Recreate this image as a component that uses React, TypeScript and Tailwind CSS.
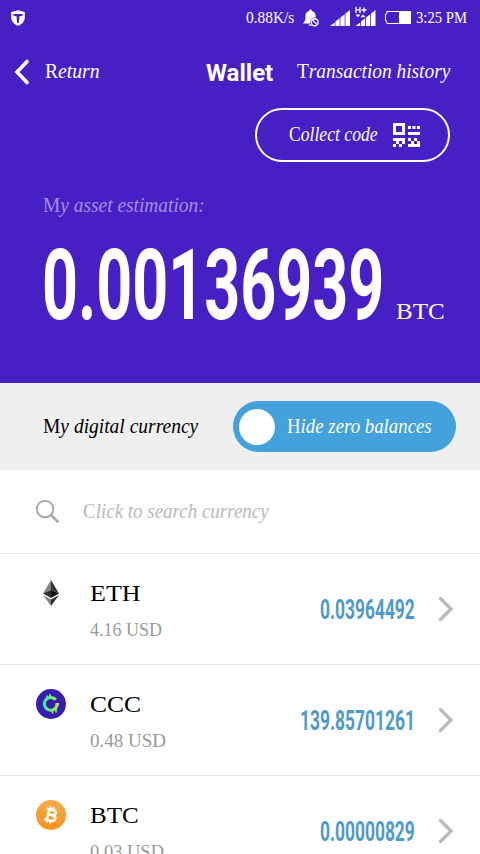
import { useLayoutEffect, useRef, useState } from 'react';
import { clsx } from 'clsx';

interface FitProps {
  text: string;
  width: number;
  script?: boolean;
  className?: string;
}

// Stretches a single line of text so that it fills exactly `width` pixels
function Fit({ text, width, script, className }: FitProps) {
  const ref = useRef<HTMLSpanElement>(null);
  const [scale, setScale] = useState(1);

  useLayoutEffect(() => {
    if (ref.current) setScale(width / ref.current.offsetWidth);
  }, [text, width]);

  return (
    <span className={clsx('block shrink-0 whitespace-nowrap', className)} style={{ width }}>
      <span
        ref={ref}
        className="inline-block origin-left"
        style={{ transform: `scaleX(${scale})` }}
      >
        {script
          ? text.split(/([A-Z])/).map((part, i) => (
              <span key={i} className={/^[A-Z]$/.test(part) ? 'not-italic' : 'italic'}>
                {part}
              </span>
            ))
          : text}
      </span>
    </span>
  );
}

function Chevron({ className, left }: { className?: string; left?: boolean }) {
  return (
    <svg viewBox="0 0 16 26" className={className} fill="none" stroke="currentColor" strokeLinecap="round">
      <path d={left ? 'M13 2.5 L3 13 L13 23.5' : 'M2.5 2.5 L13 13 L2.5 23.5'} />
    </svg>
  );
}

function ShieldIcon() {
  return (
    <svg viewBox="0 0 14 16" className="h-4 w-3.5">
      <path d="M7 0.3 L13.8 2 V7.5 C13.8 11.5 10.5 14.5 7 15.8 C3.5 14.5 0.2 11.5 0.2 7.5 V2 Z" fill="#fff" />
      <path d="M2 4 H12 L11.2 5.8 L8.5 6.2 L7.8 13 H6.2 L5.5 6.2 L2.8 5.8 Z" fill="#4720c5" />
    </svg>
  );
}

function BellOffIcon() {
  return (
    <svg viewBox="0 0 16 18" className="h-[18px] w-4">
      <path
        d="M7.5 0.5 C8.3 0.5 8.8 1 8.8 2 C11.5 2.6 12.6 4.6 12.6 7 V11 L15 14.5 H0 L2.4 11 V7 C2.4 4.6 3.5 2.6 6.2 2 C6.2 1 6.7 0.5 7.5 0.5 Z"
        fill="#fff"
      />
      <path d="M5.5 15.2 H9 V17 H6.8 Z" fill="#fff" />
      <circle cx="11.6" cy="13.2" r="4.6" fill="#4720c5" />
      <circle cx="11.6" cy="13.2" r="3.5" fill="none" stroke="#fff" strokeWidth="1.4" />
      <path d="M9.4 11 L13.8 15.4" stroke="#fff" strokeWidth="1.3" />
    </svg>
  );
}

function SignalIcon() {
  return (
    <svg viewBox="0 0 20 16" className="h-4 w-5" fill="#fff">
      <path d="M0 16 L4.7 12.4 V16 Z M5.4 16 V11.5 L9.7 8.2 V16 Z M10.4 16 V7.6 L14.7 4.2 V16 Z M15.4 16 V3.6 L20 0 V16 Z" />
    </svg>
  );
}

function MobileDataIcon() {
  return (
    <svg viewBox="0 0 21 20" className="h-5 w-[21px]" fill="#fff">
      <path d="M0.5 20 L5.2 16.4 V20 Z M6 20 V15.5 L10.2 12.2 V20 Z M11 20 V11.6 L15.2 8.2 V20 Z M16 20 V7.6 L20.5 4 V20 Z" />
      <path d="M0.5 8.5 H5.5 L3 11.2 Z M5.5 11.2 H10.5 L8 8.5 Z" />
      <path d="M1 0.8 V7 M5 0.8 V7 M1 3.8 H5 M6.5 4 H11.5 M9 1.5 V6.5" stroke="#fff" strokeWidth="1.3" />
    </svg>
  );
}

function BatteryIcon() {
  return (
    <svg viewBox="0 0 26 13" className="h-[13px] w-[26px]">
      <path d="M1.8 0.5 H25.5 V12.5 H1.8 V10 H0.5 V3 H1.8 Z" fill="none" stroke="#fff" strokeWidth="1" />
      <rect x="14" y="0" width="12" height="13" fill="#fff" />
    </svg>
  );
}

const qrRows = [
  '####.....',
  '#..#.....',
  '#..#.....',
  '####.####',
  '.........',
  '####.#.#.',
  '.#.#..#.#',
  '#.#..####',
];

function QrIcon() {
  return (
    <svg viewBox="0 0 27 24" className="h-6 w-[27px]" fill="#fff" shapeRendering="crispEdges">
      {qrRows.map((row, y) =>
        row.split('').map((c, x) =>
          c === '#' ? <rect key={`${x}-${y}`} x={x * 3} y={y * 3} width="3" height="3" /> : null
        )
      )}
      <path d="M15 3 H18 V6 H15 Z M24 3 H27 V6 H24 Z" />
      <path d="M19 3 H20 V6 H19 Z M22 3 H23 V6 H22 Z" opacity="0.6" />
      <path d="M20 3 H22 V6 H20 Z" />
    </svg>
  );
}

function EthIcon() {
  return (
    <svg viewBox="0 0 30 30" className="size-[30px]">
      <path d="M15 2 L7 15.5 L15 12 Z" fill="#828384" />
      <path d="M15 2 L23 15.5 L15 12 Z" fill="#343434" />
      <path d="M7 15.5 L15 12 V20 Z" fill="#2f3030" />
      <path d="M23 15.5 L15 12 V20 Z" fill="#131313" />
      <path d="M7 17 L15 21.6 V28 Z" fill="#828384" />
      <path d="M23 17 L15 21.6 V28 Z" fill="#2f3030" />
    </svg>
  );
}

function CccIcon() {
  return (
    <svg viewBox="0 0 30 30" className="size-[30px]" fill="none">
      <defs>
        <linearGradient id="ccc" x1="7" y1="0" x2="23" y2="0" gradientUnits="userSpaceOnUse">
          <stop offset="0" stopColor="#2cf0a0" />
          <stop offset="1" stopColor="#b4f03c" />
        </linearGradient>
      </defs>
      <circle cx="15" cy="15" r="15" fill="#3a1db0" />
      <path d="M19.8 10.8 A6.4 6.4 0 1 0 21.2 15" stroke="url(#ccc)" strokeWidth="3" />
      <path d="M11 9.5 V6.5 M14 8 V5 M16.5 21.5 V24.5 M20 20 V23.5" stroke="url(#ccc)" strokeWidth="1.7" />
      <path d="M19.5 15 H23" stroke="#b4f03c" strokeWidth="2" />
    </svg>
  );
}

function BtcIcon() {
  return (
    <svg viewBox="0 0 30 30" className="size-[30px]">
      <defs>
        <linearGradient id="btc" x1="0" y1="0" x2="0" y2="30" gradientUnits="userSpaceOnUse">
          <stop offset="0" stopColor="#f9aa4b" />
          <stop offset="1" stopColor="#f7931a" />
        </linearGradient>
      </defs>
      <circle cx="15" cy="15" r="15" fill="url(#btc)" />
      <g transform="rotate(14 15 15)" fill="none" stroke="#fff">
        <path d="M9.2 9.6 H15.8 C20.4 9.6 20.4 14.8 15.8 14.8 H12 M15.8 14.8 C21.4 14.8 21.4 20.6 16 20.6 H9.2 M12 9.6 V20.6" strokeWidth="2.5" />
        <path d="M12.8 6.3 V10 M16 6.3 V10 M12.8 20 V23.7 M16 20 V23.7" strokeWidth="1.7" />
      </g>
    </svg>
  );
}

const coins = [
  { name: 'ETH', nameWidth: 51, usd: '4.16 USD', usdWidth: 72, amount: '0.03964492', amountWidth: 95, icon: <EthIcon /> },
  { name: 'CCC', nameWidth: 51, usd: '0.48 USD', usdWidth: 76, amount: '139.85701261', amountWidth: 115, icon: <CccIcon /> },
  { name: 'BTC', nameWidth: 49, usd: '0.03 USD', usdWidth: 74, amount: '0.00000829', amountWidth: 95, icon: <BtcIcon /> },
];

export default function App() {
  return (
    <div className="flex h-[854px] w-[480px] flex-col overflow-hidden bg-white font-['Liberation_Serif',serif] text-xl leading-6">
      <section className="h-[383px] shrink-0 bg-[#4720c5] text-white">
        <div className="flex h-9 items-center pl-[11px]">
          <ShieldIcon />
          <Fit text="0.88K/s" width={48} className="ml-[221px] text-[17px]" />
          <div className="ml-[9px]">
            <BellOffIcon />
          </div>
          <div className="ml-[11px]">
            <SignalIcon />
          </div>
          <div className="mb-1 ml-[5px]">
            <MobileDataIcon />
          </div>
          <div className="mb-px ml-[9px]">
            <BatteryIcon />
          </div>
          <Fit text="3:25 PM" width={51} className="ml-[5px] text-[17px]" />
        </div>

        <div className="flex h-[72px] items-center pl-3.5">
          <Chevron left className="h-[26px] w-4 stroke-[3.6]" />
          <Fit text="Return" width={55} script className="mb-0.5 ml-[15px]" />
          <Fit text="Wallet" width={67} className="ml-[106px] pt-0.5 font-['Roboto',sans-serif] text-2xl font-bold" />
          <Fit text="Transaction history" width={153} script className="mb-0.5 ml-6" />
        </div>

        <button className="ml-[255px] flex h-[54px] w-[195px] items-center rounded-full border-2 border-white pl-8">
          <Fit text="Collect code" width={89} script className="mb-0.5" />
          <span className="ml-[15px]">
            <QrIcon />
          </span>
        </button>

        <div className="mt-[31px] pl-[43px] text-[#a68ee6]">
          <Fit text="My asset estimation:" width={162} script />
        </div>

        <div className="mt-[19px] flex items-end pl-[42px]">
          <Fit
            text="0.00136939"
            width={342}
            className="font-['Roboto',sans-serif] text-[98px] leading-[100px] font-bold"
          />
          <Fit text="BTC" width={49} className="mb-[9px] ml-3 text-2xl" />
        </div>
      </section>

      <section className="flex h-[87px] shrink-0 items-center bg-[#efefef] pl-[43px] text-black">
        <Fit text="My digital currency" width={155} script className="mb-0.5" />
        <button className="ml-[35px] flex h-[51px] w-[223px] items-center rounded-full bg-[#43a1db] pl-1.5 text-white">
          <span className="size-9 rounded-full bg-white" />
          <Fit text="Hide zero balances" width={145} script className="mb-0.5 ml-3" />
        </button>
      </section>

      <section className="flex h-[83px] shrink-0 items-center pl-[35px] text-[#b8b8b8]">
        <svg viewBox="0 0 25 25" className="size-[25px]" fill="none" stroke="#aaa" strokeLinecap="round">
          <circle cx="10" cy="10" r="8.3" strokeWidth="2" />
          <path d="M16 16 L22.7 22.7" strokeWidth="2.6" />
        </svg>
        <Fit text="Click to search currency" width={186} script className="mb-0.5 ml-[23px]" />
      </section>

      <ul>
        {coins.map((coin) => (
          <li key={coin.name} className="flex h-[111px] shrink-0 border-t border-[#e5e5e5] pr-[26px] pl-9">
            <div className="mt-6">{coin.icon}</div>
            <div className="mt-[23px] ml-6 flex-1">
              <Fit text={coin.name} width={coin.nameWidth} className="text-2xl text-black" />
              <Fit text={coin.usd} width={coin.usdWidth} className="mt-[9px] text-[19px] text-[#999]" />
            </div>
            <div className="flex items-center">
              <Fit
                text={coin.amount}
                width={coin.amountWidth}
                className="pt-0.5 font-['Roboto',sans-serif] text-[28px] font-bold text-[#4e9bca]"
              />
              <Chevron className="ml-[23px] h-[26px] w-4 stroke-[3.4] text-[#bbb]" />
            </div>
          </li>
        ))}
      </ul>
    </div>
  );
}
